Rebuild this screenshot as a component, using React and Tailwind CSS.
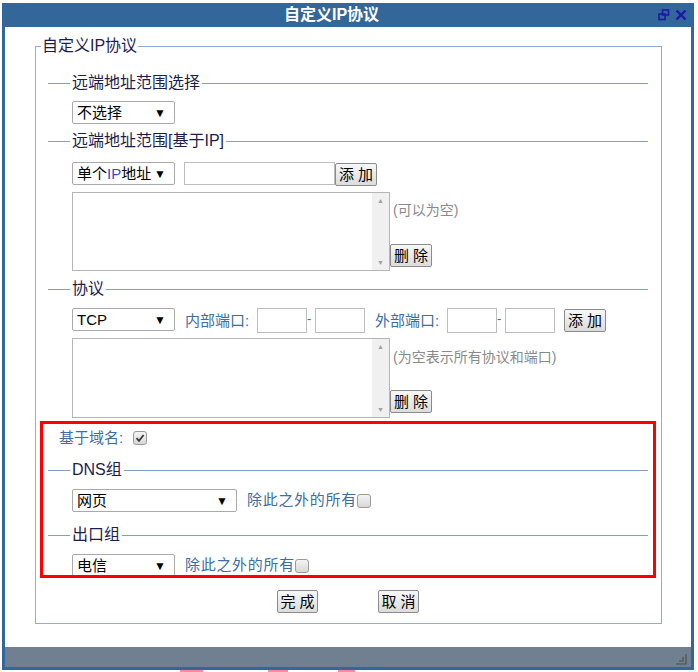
import React from "react";

const FONT = { fontFamily: '"Liberation Sans", "Noto Sans CJK SC", sans-serif' };

const Select = ({ value, width }) => (
  <div
    className={`${width} h-[23px] shrink-0 flex items-center justify-between border border-[#a9a9a9] rounded-[2px] bg-white pl-[4px] pr-[8px] text-[15px] text-black`}
  >
    <span className="leading-none whitespace-nowrap">{value}</span>
    <span className="text-[12px] leading-none">▼</span>
  </div>
);

const Btn = ({ label, className = "" }) => (
  <button
    className={`h-[23px] shrink-0 whitespace-nowrap border border-[#8b8b8b] rounded-[2px] bg-gradient-to-b from-[#f7f7f7] to-[#dcdcdc] text-[15px] leading-none text-black px-0 ${className}`}
  >
    {label}
  </button>
);

const Input = ({ width }) => (
  <div className={`${width} h-[25px] shrink-0 border border-[#bdbdbd] bg-white`} />
);

const Checkbox = ({ checked }) => (
  <span className="inline-flex w-[14px] h-[14px] shrink-0 items-center justify-center border border-[#9a9a9a] rounded-[3px] bg-gradient-to-b from-[#f4f4f4] to-[#d8d8d8]">
    {checked && (
      <svg width="10" height="10" viewBox="0 0 10 10">
        <path d="M1.5 5.2 L4 7.8 L8.6 2" fill="none" stroke="#3a3a3a" strokeWidth="1.8" />
      </svg>
    )}
  </span>
);

const ListBox = ({ height, hint, hintTop, btnBottom }) => (
  <div className={`flex ${height}`}>
    <div className="w-[318px] h-full border border-[#b5b5b5] bg-white flex">
      <div className="flex-1" />
      <div className="w-[17px] h-full bg-[#f0f0f0] flex flex-col justify-between items-center py-[4px] text-[7px] text-[#a0a0a0] leading-none">
        <span>▲</span>
        <span>▼</span>
      </div>
    </div>
    <div className={`h-full flex flex-col justify-between items-start ${hintTop} ${btnBottom}`}>
      <span className="ml-[3px] text-[14px] leading-[20px] text-[#8a8a8a] whitespace-nowrap">{hint}</span>
      <Btn label="删 除" className="w-[42px]" />
    </div>
  </div>
);

const Group = ({ title, className = "", children }) => (
  <fieldset className={`border-t border-[#7f9fc6] pl-[22px] ${className}`}>
    <legend className="px-[2px] text-[16px] leading-[16px] text-[#1d1d4d]">{title}</legend>
    <div className="ml-[2px]">{children}</div>
  </fieldset>
);

const TitleIcons = () => (
  <div className="flex items-center gap-[5px] pr-[4px]">
    <svg width="12" height="12" viewBox="0 0 12 12">
      <rect x="4.5" y="1" width="6" height="5" fill="none" stroke="#1a1aa8" strokeWidth="1.6" />
      <rect x="1" y="5" width="6" height="5.5" fill="none" stroke="#1a1aa8" strokeWidth="1.6" />
    </svg>
    <svg width="12" height="12" viewBox="0 0 12 12">
      <path d="M1.5 1.5 L10.5 10.5 M10.5 1.5 L1.5 10.5" stroke="#1a1aa8" strokeWidth="2.4" />
    </svg>
  </div>
);

export default function App() {
  return (
    <div className="w-[698px] h-[672px] bg-white overflow-hidden" style={FONT}>
      <div className="ml-[2px] mt-[3px] w-[692px] border-x-[3px] border-b-[3px] border-[#336699]">
        <div className="h-[24px] bg-[#336699] flex items-center">
          <div className="flex-1 text-center text-white font-bold text-[16px] leading-none">
            自定义IP协议
          </div>
          <TitleIcons />
        </div>

        <div className="h-[620px] bg-white pt-[11px] pl-[30px]">
          <fieldset className="w-[627px] border border-[#8eaed3] px-[5px] pb-[10px]">
            <legend className="px-[1px] text-[16px] leading-[16px] text-[#1d1d4d]">自定义IP协议</legend>
            <div className="ml-[7px] mr-[8px]">
              <Group title="远端地址范围选择" className="mt-[21px]">
                <div className="mt-[10px]">
                  <Select value="不选择" width="w-[103px]" />
                </div>
              </Group>

              <Group title="远端地址范围[基于IP]" className="mt-[9px]">
                <div className="mt-[13px] h-[24px] flex items-start">
                  <Select value={<>单个<span className="text-[#3a48c8]">IP</span>地址</>} width="w-[103px]" />
                  <div className="ml-[9px] w-[151px] h-[23px] border border-[#bdbdbd] bg-white" />
                  <Btn label="添 加" className="mt-[1px] w-[42px]" />
                </div>
                <div className="mt-[6px]">
                  <ListBox height="h-[79px]" hint="(可以为空)" hintTop="pt-[8px]" btnBottom="pb-[4px]" />
                </div>
              </Group>

              <Group title="协议" className="mt-[10px]">
                <div className="mt-[11px] h-[25px] flex items-start">
                  <Select value="TCP" width="w-[103px]" />
                  <span className="ml-[10px] w-[72px] text-[15px] leading-[25px] text-[#3b6ea5]">内部端口:</span>
                  <Input width="w-[50px]" />
                  <span className="w-[8px] text-[13px] leading-[22px] text-[#3b6ea5]">-</span>
                  <Input width="w-[50px]" />
                  <span className="ml-[10px] w-[72px] text-[15px] leading-[25px] text-[#3b6ea5]">外部端口:</span>
                  <Input width="w-[50px]" />
                  <span className="w-[8px] text-[13px] leading-[22px] text-[#3b6ea5]">-</span>
                  <Input width="w-[50px]" />
                  <Btn label="添 加" className="ml-[9px] mt-[1px] w-[42px]" />
                </div>
                <div className="mt-[5px]">
                  <ListBox height="h-[80px]" hint="(为空表示所有协议和端口)" hintTop="pt-[9px]" btnBottom="pb-[5px]" />
                </div>
              </Group>

              <div className="-mx-[8px] mt-[3px] h-[157px] overflow-hidden border-[3px] border-[#ff0000] px-[5px]">
                <div className="mt-[4px] ml-[11px] h-[20px] flex items-center gap-[2px] text-[15px] text-[#3b6ea5]">
                  <span className="w-[72px]">基于域名:</span>
                  <Checkbox checked />
                </div>

                <Group title="DNS组" className="mt-[14px]">
                  <div className="mt-[11px] h-[23px] flex items-center">
                    <Select value="网页" width="w-[165px]" />
                    <span className="ml-[10px] text-[15px] tracking-[0.7px] text-[#3b6ea5]">除此之外的所有</span>
                    <Checkbox />
                  </div>
                </Group>

                <Group title="出口组" className="mt-[15px]">
                  <div className="mt-[11px] h-[23px] flex items-center">
                    <Select value="电信" width="w-[103px]" />
                    <span className="ml-[10px] text-[15px] tracking-[0.7px] text-[#3b6ea5]">除此之外的所有</span>
                    <Checkbox />
                  </div>
                </Group>
              </div>

              <div className="mt-[12px] flex justify-center gap-[60px]">
                <Btn label="完 成" className="w-[41px]" />
                <Btn label="取 消" className="w-[41px]" />
              </div>
            </div>
          </fieldset>
        </div>

        <div className="h-[20px] bg-[#708090] flex items-end justify-end pr-[4px] pb-[2px]">
          <svg width="12" height="12" viewBox="0 0 12 12">
            <path d="M11 1 V11 H1 M8 4 V8 H4" fill="none" stroke="#4a4f55" strokeWidth="1.2" />
          </svg>
        </div>
      </div>
      <div className="h-[2px] flex">
        <div className="ml-[180px] w-[23px] bg-[#ff8a98]" />
        <div className="ml-[65px] w-[20px] bg-[#ff8a98]" />
        <div className="ml-[50px] w-[17px] bg-[#ff8a98]" />
      </div>
    </div>
  );
}
